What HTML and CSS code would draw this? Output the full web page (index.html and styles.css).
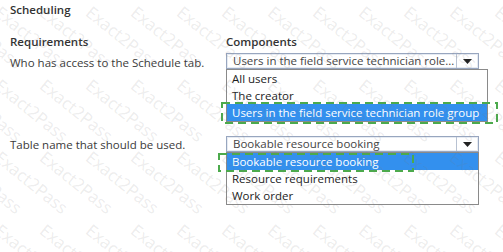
FILE: index.html
```html
<!DOCTYPE html>
<html>
<head>
<meta charset="utf-8">
<link rel="stylesheet" href="styles.css">
</head>
<body>
<div class="page">
  <div class="title">Scheduling</div>
  <div class="grid">
    <div class="head">Requirements</div>
    <div class="head">Components</div>

    <div class="label label-1">Who has access to the Schedule tab.</div>
    <div class="field">
      <div class="select">
        <span class="val">Users in the field service technician role...</span>
        <span class="btn"><svg width="9" height="5" viewBox="0 0 9 5"><path d="M0 0h9L4.5 5z" fill="#222"/></svg></span>
      </div>
      <ul class="list list-wide">
        <li>All users</li>
        <li>The creator</li>
        <li class="sel">Users in the field service technician role group
          <svg class="mark mark-1" width="277" height="22"><rect x="1" y="1" width="275" height="20" fill="none" stroke="#4caa4c" stroke-width="2" stroke-dasharray="8 5"/></svg>
        </li>
      </ul>
    </div>

    <div class="label label-2">Table name that should be used.</div>
    <div class="field field-2">
      <div class="select">
        <span class="val">Bookable resource booking</span>
        <span class="btn"><svg width="9" height="5" viewBox="0 0 9 5"><path d="M0 0h9L4.5 5z" fill="#222"/></svg></span>
      </div>
      <ul class="list">
        <li class="sel">Bookable resource booking
          <svg class="mark mark-2" width="196" height="19"><rect x="1" y="1" width="194" height="17" fill="none" stroke="#4caa4c" stroke-width="2" stroke-dasharray="8 5"/></svg>
        </li>
        <li>Resource requirements</li>
        <li>Work order</li>
      </ul>
    </div>
  </div>

  <div class="wm" aria-hidden="true">
    <span>Exact2Pass</span><span>Exact2Pass</span><span>Exact2Pass</span><span>Exact2Pass</span><span>Exact2Pass</span><span>Exact2Pass</span><span>Exact2Pass</span><span>Exact2Pass</span><span>Exact2Pass</span><span>Exact2Pass</span><span>Exact2Pass</span><span>Exact2Pass</span><span>Exact2Pass</span>
    <span>Exact2Pass</span><span>Exact2Pass</span><span>Exact2Pass</span><span>Exact2Pass</span><span>Exact2Pass</span><span>Exact2Pass</span><span>Exact2Pass</span><span>Exact2Pass</span><span>Exact2Pass</span><span>Exact2Pass</span><span>Exact2Pass</span><span>Exact2Pass</span><span>Exact2Pass</span>
    <span>Exact2Pass</span><span>Exact2Pass</span><span>Exact2Pass</span><span>Exact2Pass</span><span>Exact2Pass</span><span>Exact2Pass</span><span>Exact2Pass</span><span>Exact2Pass</span><span>Exact2Pass</span><span>Exact2Pass</span><span>Exact2Pass</span><span>Exact2Pass</span><span>Exact2Pass</span>
    <span>Exact2Pass</span><span>Exact2Pass</span><span>Exact2Pass</span><span>Exact2Pass</span><span>Exact2Pass</span><span>Exact2Pass</span><span>Exact2Pass</span><span>Exact2Pass</span><span>Exact2Pass</span><span>Exact2Pass</span><span>Exact2Pass</span><span>Exact2Pass</span><span>Exact2Pass</span>
  </div>
</div>
</body>
</html>
```

FILE: styles.css
```css
html, body {
  margin: 0;
  padding: 0;
  background: #fff;
}
body {
  width: 503px;
  height: 252px;
  overflow: hidden;
  font-family: "Open Sans", "Noto Sans", sans-serif;
  font-size: 11.5px;
  color: #3a3a3a;
}
.page {
  position: relative;
  width: 503px;
  height: 252px;
  padding: 2px 0 0 10px;
  box-sizing: border-box;
}
.title {
  line-height: 16px;
  font-weight: 600;
  color: #333;
}
.grid {
  display: grid;
  grid-template-columns: 216px 1fr;
  margin-top: 16px;
}
.head {
  line-height: 16px;
  font-weight: 600;
  color: #333;
  margin-bottom: 3px;
}
.label {
  line-height: 16px;
}
.label-1 {
  padding-top: 2px;
}
.label-2 {
  padding-top: 1px;
  margin-top: 14px;
}
.field-2 {
  margin-top: 14px;
}
.select {
  display: flex;
  align-items: stretch;
  width: 253px;
  height: 16px;
  box-sizing: border-box;
  border: 1px solid #98a6bf;
  box-shadow: inset 0 0 0 1px #e6ebf2;
  background: #fff;
  color: #444;
}
.val {
  flex: 1;
  padding-left: 6px;
  line-height: 14px;
  white-space: nowrap;
  overflow: hidden;
}
.btn {
  width: 21px;
  border-left: 1px solid #b8c2d2;
  display: flex;
  align-items: center;
  justify-content: center;
}
.list {
  list-style: none;
  margin: 0;
  padding: 0;
  width: 253px;
  box-sizing: border-box;
  border: 1px solid #8a8a8a;
  background: #fff;
  color: #1c1c1c;
}
.list-wide {
  width: 262px;
}
.list li {
  position: relative;
  height: 17px;
  line-height: 17px;
  padding-left: 5px;
  white-space: nowrap;
}
.list li.sel {
  background: #3390ee;
  color: #fff;
}
.mark {
  position: absolute;
  overflow: visible;
}
.mark-1 {
  left: -6px;
  top: -2px;
}
.mark-2 {
  left: -9px;
  top: 0;
}
.wm {
  position: absolute;
  top: 0;
  left: 0;
  width: 546px;
  height: 252px;
  overflow: hidden;
  pointer-events: none;
  display: grid;
  grid-template-columns: repeat(13, 45.5px);
  grid-auto-rows: 72.5px;
  padding: 3px 0 0 0;
  margin-left: -43px;
  box-sizing: border-box;
}
.wm span {
  display: block;
  font-family: "Open Sans", sans-serif;
  font-size: 17px;
  line-height: 17px;
  color: rgba(120, 120, 120, 0.14);
  white-space: nowrap;
  transform: rotate(39deg);
  transform-origin: 0 0;
}
```
